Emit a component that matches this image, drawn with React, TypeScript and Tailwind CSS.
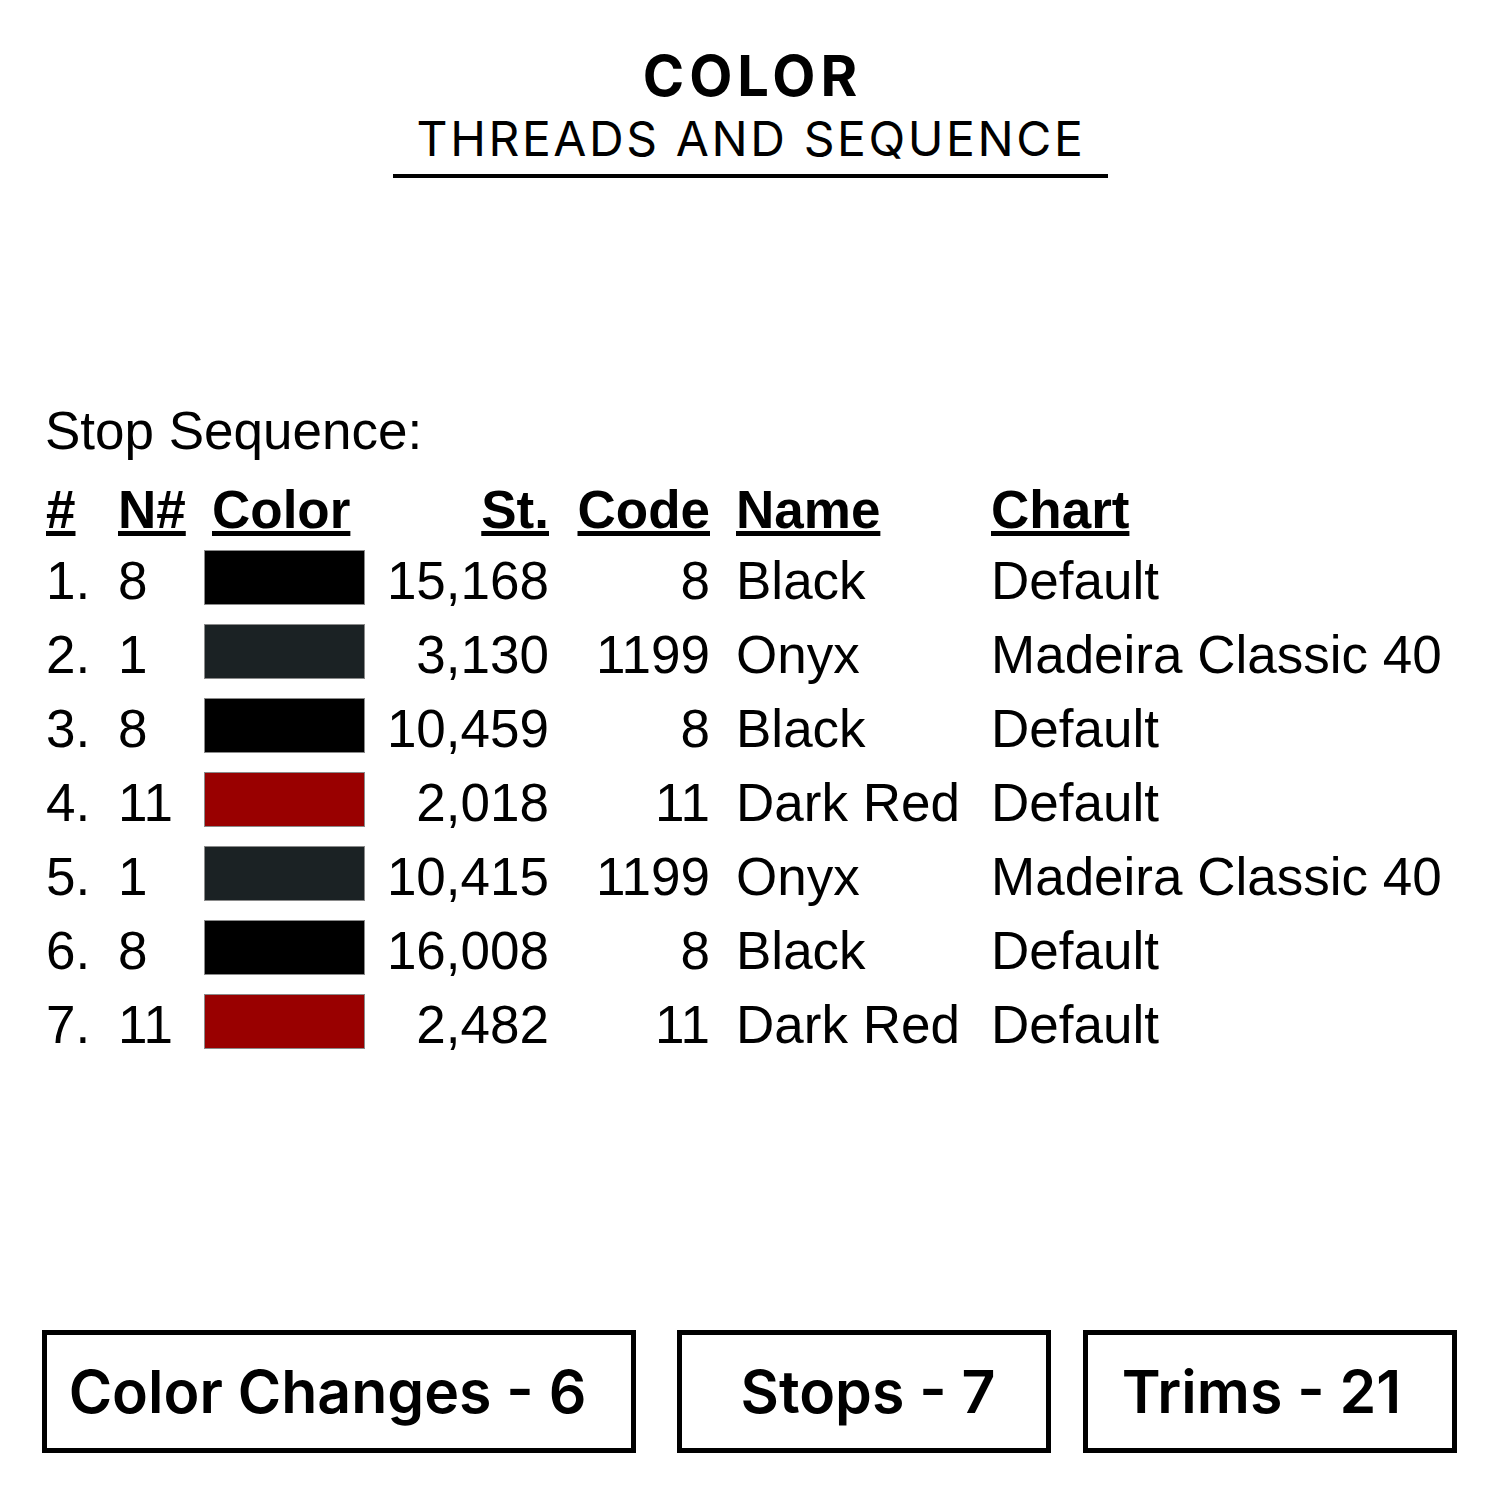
const rows = [
  { n: '1.', needle: '8', color: '#000000', st: '15,168', code: '8', name: 'Black', chart: 'Default' },
  { n: '2.', needle: '1', color: '#1b2224', st: '3,130', code: '1199', name: 'Onyx', chart: 'Madeira Classic 40' },
  { n: '3.', needle: '8', color: '#000000', st: '10,459', code: '8', name: 'Black', chart: 'Default' },
  { n: '4.', needle: '11', color: '#990000', st: '2,018', code: '11', name: 'Dark Red', chart: 'Default' },
  { n: '5.', needle: '1', color: '#1b2224', st: '10,415', code: '1199', name: 'Onyx', chart: 'Madeira Classic 40' },
  { n: '6.', needle: '8', color: '#000000', st: '16,008', code: '8', name: 'Black', chart: 'Default' },
  { n: '7.', needle: '11', color: '#990000', st: '2,482', code: '11', name: 'Dark Red', chart: 'Default' },
];

const cols = 'grid grid-cols-[72px_86px_161px_184px_161px_281px_1fr] pl-[46px]';
const head = 'underline decoration-[5px] underline-offset-[3px]';

function StatBox({ label, width, shift }: { label: string; width: string; shift: string }) {
  return (
    <div className={`${width} h-[123px] border-[5px] border-black flex items-center justify-center ${shift}`}>
      <span className="text-[59px] font-semibold leading-none text-black">{label}</span>
    </div>
  );
}

export default function App() {
  return (
    <div className="w-[1500px] h-[1500px] bg-white text-black font-['Liberation_Sans',Arial,sans-serif]">
      {/* Title */}
      <div className="pt-[48px] flex flex-col items-center font-['Inter','Noto_Sans',sans-serif]">
        <div className="text-[56px] font-bold leading-none tracking-[5px] pl-[5px]">COLOR</div>
        <div className="mt-[11px] text-[48px] font-normal leading-none tracking-[2.6px] pl-[2px]">THREADS AND SEQUENCE</div>
        <div className="mt-[11px] w-[715px] h-[4px] bg-black" />
      </div>

      {/* Stop sequence table */}
      <div className="mt-[226px] pl-[45px] text-[53px] leading-none">Stop Sequence:</div>

      <div className={`${cols} mt-[19px] h-[68px] text-[53px] leading-[68px] font-bold`}>
        <div><span className={head}>#</span></div>
        <div><span className={head}>N#</span></div>
        <div className="pl-2"><span className={head}>Color</span></div>
        <div className="text-right"><span className={head}>St.</span></div>
        <div className="text-right"><span className={head}>Code</span></div>
        <div className="pl-[26px]"><span className={head}>Name</span></div>
        <div><span className={head}>Chart</span></div>
      </div>

      {rows.map((r, i) => (
        <div key={i} className={`${cols} h-[74px] text-[53px] leading-[74px] whitespace-nowrap`}>
          <div>{r.n}</div>
          <div>{r.needle}</div>
          <div className="pt-[6px]">
            <div className="w-[161px] h-[55px] border border-[#8a8a8a]" style={{ backgroundColor: r.color }} />
          </div>
          <div className="text-right">{r.st}</div>
          <div className="text-right">{r.code}</div>
          <div className="pl-[26px]">{r.name}</div>
          <div>{r.chart}</div>
        </div>
      ))}

      {/* Totals */}
      <div className="mt-[268px] pl-[42px] flex font-['Inter','Noto_Sans',sans-serif]">
        <StatBox label="Color Changes - 6" width="w-[594px]" shift="pr-[23px]" />
        <div className="ml-[41px]">
          <StatBox label="Stops - 7" width="w-[374px]" shift="pl-[8px]" />
        </div>
        <div className="ml-[32px]">
          <StatBox label="Trims - 21" width="w-[374px]" shift="pr-[17px]" />
        </div>
      </div>
    </div>
  );
}
